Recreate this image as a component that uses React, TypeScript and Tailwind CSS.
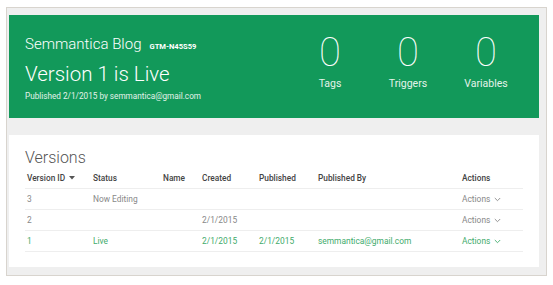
import React from "react";

const cols = ["w-[66px]", "w-[70px]", "w-[39px]", "w-[57px]", "w-[59px]", "w-[144px]", "flex-1"];

function Chevron({ color }: { color: string }) {
  return (
    <svg width="7" height="5" viewBox="0 0 7 5" className="ml-[4px] mt-[1px]">
      <path d="M0.8 1 L3.5 3.7 L6.2 1" fill="none" stroke={color} strokeWidth="0.9" />
    </svg>
  );
}

type Row = { id: string; status: string; name: string; created: string; published: string; by: string; live?: boolean };

const rows: Row[] = [
  { id: "3", status: "Now Editing", name: "", created: "", published: "", by: "" },
  { id: "2", status: "", name: "", created: "2/1/2015", published: "", by: "" },
  { id: "1", status: "Live", name: "", created: "2/1/2015", published: "2/1/2015", by: "semmantica@gmail.com", live: true },
];

export default function App() {
  return (
    <div className="w-[553px] h-[285px] bg-white pt-[7px] pl-[6px]" style={{ fontFamily: "Roboto, 'Liberation Sans', sans-serif" }}>
      <div className="w-[541px] h-[269px] border border-[#d8d4ce] bg-[#efefef] pt-[7px] pl-[2px] pr-[7px]">
        <div className="h-[103px] bg-[#12995a] flex justify-between items-start pl-[16px] pr-[14px] text-white">
          <div className="pt-[19px]">
            <div className="flex items-baseline h-[20px] leading-[20px]">
              <span className="text-[15px] font-light">Semmantica Blog</span>
              <span className="ml-[8px] text-[7.6px] font-bold">GTM-N45S59</span>
            </div>
            <div className="mt-[7px] text-[20.5px] leading-[26px] font-light">Version 1 is Live</div>
            <div className="mt-[2px] text-[8.2px] leading-[14px] text-[#e4f3ea]">Published 2/1/2015 by semmantica@gmail.com</div>
          </div>
          <div className="flex pt-[18px]">
            {["Tags", "Triggers", "Variables"].map((l) => (
              <div key={l} className="w-[78px] flex flex-col items-center">
                <div className="text-[40px] leading-[40px] font-thin">0</div>
                <div className="mt-[4px] text-[10.5px] leading-[14px] text-[#e4f3ea]">{l}</div>
              </div>
            ))}
          </div>
        </div>
        <div className="mt-[17px] h-[132px] bg-white pt-[13px] pl-[16px] pr-[16px]">
          <div className="text-[16px] leading-[20px] font-light text-[#555]">Versions</div>
          <div className="w-[498px]">
            <div className="flex items-center h-[21px] border-b border-[#eeeeee] pl-[2px] text-[8.3px] font-medium text-[#444]">
              {["Version ID", "Status", "Name", "Created", "Published", "Published By", "Actions"].map((h, i) => (
                <div key={h} className={`${cols[i]} flex items-center`}>
                  {h}
                  {i === 0 && (
                    <svg width="6" height="4" viewBox="0 0 6 4" className="ml-[4px]">
                      <path d="M0 0 L6 0 L3 3.5 Z" fill="#555" />
                    </svg>
                  )}
                </div>
              ))}
            </div>
            {rows.map((r) => {
              const c = r.live ? "text-[#3fab6c]" : "text-[#888]";
              const chev = r.live ? "#3fab6c" : "#888";
              return (
                <div key={r.id} className={`flex items-center h-[21px] border-b border-[#eeeeee] pl-[2px] text-[8.4px] ${c}`}>
                  <div className={cols[0]}>{r.id}</div>
                  <div className={cols[1]}>{r.status}</div>
                  <div className={cols[2]}>{r.name}</div>
                  <div className={cols[3]}>{r.created}</div>
                  <div className={cols[4]}>{r.published}</div>
                  <div className={cols[5]}>{r.by}</div>
                  <div className={`${cols[6]} flex items-center`}>
                    Actions
                    <Chevron color={chev} />
                  </div>
                </div>
              );
            })}
          </div>
        </div>
      </div>
    </div>
  );
}
